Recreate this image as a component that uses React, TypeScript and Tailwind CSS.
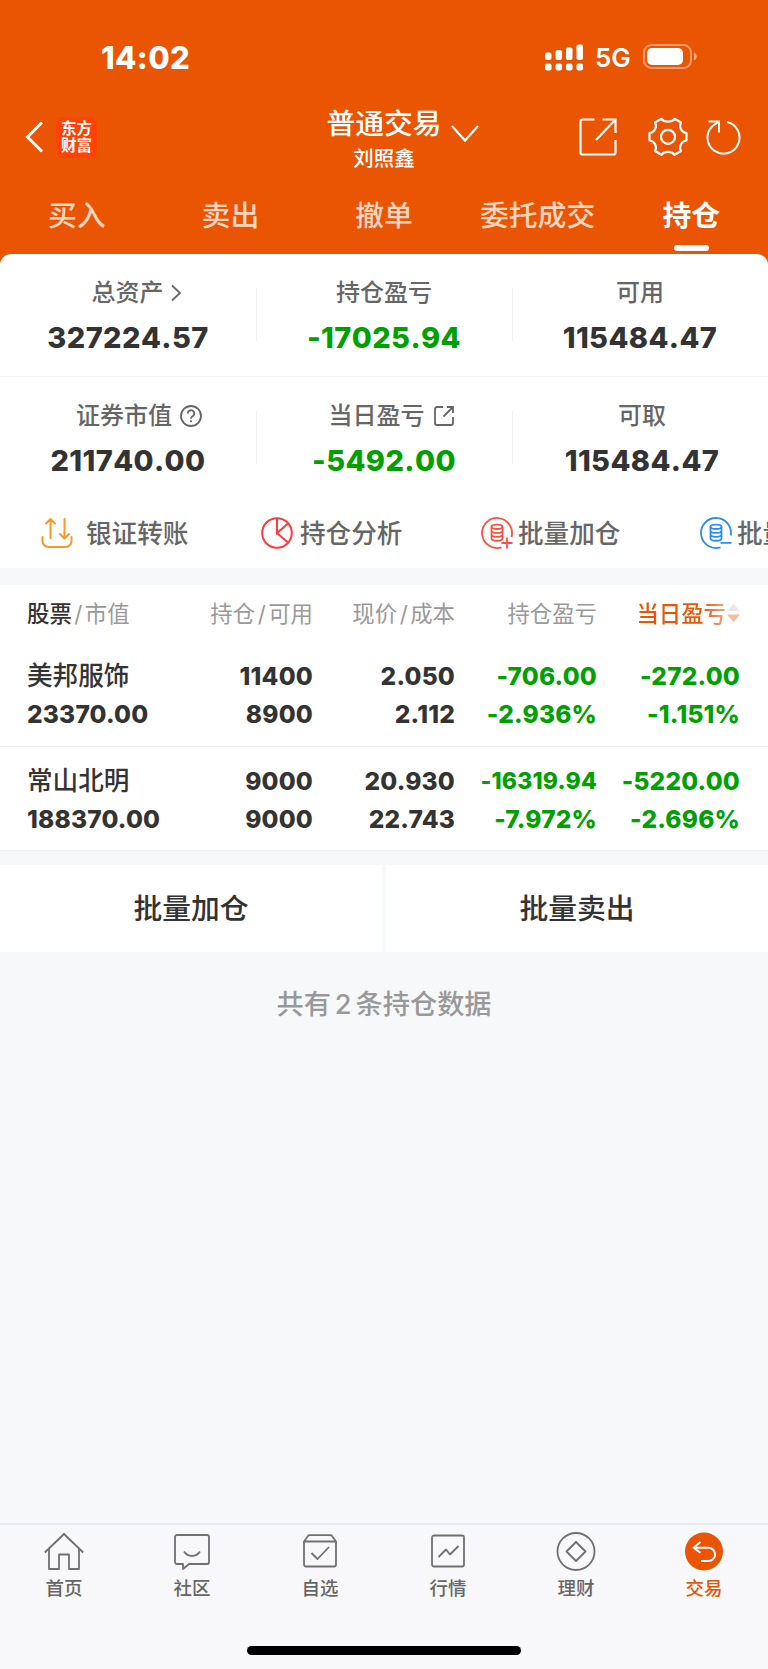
import type { ReactNode } from 'react';
import clsx from 'clsx';

const TABS = ['买入', '卖出', '撤单', '委托成交', '持仓'];

const HOLDINGS = [
  {
    name: '美邦服饰',
    value: '23370.00',
    amount: '11400',
    available: '8900',
    price: '2.050',
    cost: '2.112',
    profit: '-706.00',
    profitRate: '-2.936%',
    day: '-272.00',
    dayRate: '-1.151%',
  },
  {
    name: '常山北明',
    value: '188370.00',
    amount: '9000',
    available: '9000',
    price: '20.930',
    cost: '22.743',
    profit: '-16319.94',
    profitRate: '-7.972%',
    day: '-5220.00',
    dayRate: '-2.696%',
  },
];

const StatusBar = () => (
  <div className="flex h-[114px] items-center text-white">
    <span className="ml-[101px] w-[444px] text-[31px] leading-none font-extrabold tracking-[0.4px]">14:02</span>
    <svg width="38" height="27" viewBox="0 0 38 27" fill="currentColor">
      <rect x="0" y="8.5" width="6.5" height="7.5" rx="2" />
      <rect x="10.5" y="6" width="6.5" height="10" rx="2" />
      <rect x="21" y="3.5" width="6.5" height="12.5" rx="2" />
      <rect x="31.5" y="0.5" width="6.5" height="15.5" rx="2" />
      <rect x="0" y="19.5" width="6.5" height="7" rx="2" />
      <rect x="10.5" y="19.5" width="6.5" height="7" rx="2" />
      <rect x="21" y="19.5" width="6.5" height="7" rx="2" />
      <rect x="31.5" y="19.5" width="6.5" height="7" rx="2" />
    </svg>
    <span className="ml-3 w-[48px] pt-0.5 text-[26px] leading-none font-semibold">5G</span>
    <svg className="-mt-px" width="54" height="25" viewBox="0 0 54 25" fill="none">
      <rect x="1" y="1" width="47" height="23" rx="7.5" stroke="#fff" strokeOpacity="0.4" strokeWidth="2" />
      <rect x="4" y="4" width="36" height="17" rx="5" fill="#fff" />
      <path d="M51 8.5c3.6 1.4 3.6 6.6 0 8z" fill="#fff" fillOpacity="0.5" />
    </svg>
  </div>
);

const TitleBar = () => (
  <div className="grid h-[75px] grid-cols-[326px_1fr_190px] pt-px text-white">
    <div className="flex h-11 items-center pl-[25px]">
      <svg width="18" height="32" viewBox="0 0 18 32" fill="none" stroke="currentColor" strokeWidth="3">
        <path d="M17 1.5 2.5 16 17 30.5" />
      </svg>
      <div className="ml-[13px] flex h-[41px] w-[41px] flex-col items-center justify-center rounded-[7px] bg-[#ff4205] text-[15.5px] leading-[17.5px] font-bold">
        <span>东方</span>
        <span>财富</span>
      </div>
    </div>
    <div className="flex">
      <div className="flex w-[116px] flex-col items-center">
        <span className="-mt-2 text-[28.8px] leading-[34px] font-medium whitespace-nowrap">普通交易</span>
        <span className="mt-1 text-[20.5px] leading-7 font-medium">刘照鑫</span>
      </div>
      <svg className="mt-2.5 ml-[9px]" width="28" height="18" viewBox="0 0 28 18" fill="none" stroke="currentColor" strokeWidth="2.2">
        <path d="M1 1 14 15.5 27 1" />
      </svg>
    </div>
    <div className="flex h-11 items-center">
      <svg className="ml-px" width="38" height="38" viewBox="0 0 38 38" fill="none" stroke="currentColor" strokeWidth="2.2">
        <path d="M15.5 1.500H3.500a2 2 0 0 0-2 2v31a2 2 0 0 0 2 2h31a2 2 0 0 0 2-2V22M23.500 1.500h13v13.500M36.500 1.500 17 22" />
      </svg>
      <svg className="ml-[31px]" width="40" height="40" viewBox="0 0 40 40" fill="none" stroke="currentColor" strokeWidth="2.2">
        <path d="M13.5 1.8C16 5.500 24 5.500 26.500 1.800L33 5.500C30.500 10 33.500 15.500 38.500 16V23.500C33.500 24 30.500 29.500 33 34L26.500 37.800C24 34 16 34 13.500 37.800L7 34C9.500 29.500 6.500 24 1.500 23.500V16C6.500 15.500 9.500 10 7 5.500Z" strokeLinejoin="round" />
        <circle cx="20" cy="19.800" r="7" />
      </svg>
      <svg className="ml-[17px]" width="36" height="36" viewBox="0 0 36 36" fill="none" stroke="currentColor" strokeWidth="2">
        <path d="M22 3A16 16 0 1 1 7.500 7L13.500 3M3.500 2.500H14V13.500" />
      </svg>
    </div>
  </div>
);

const Tabs = () => (
  <div className="grid h-[65px] grid-cols-5 pt-px">
    {TABS.map((tab, i) => (
      <div
        key={tab}
        className={clsx(
          'flex flex-col items-center text-[28.8px] leading-[52px]',
          i === 4 ? 'font-bold text-white' : 'font-medium text-[#fbd5c0]',
        )}
      >
        {tab}
        {i === 4 && <span className="mt-[3px] h-[5.5px] w-[35px] rounded-full bg-white" />}
      </div>
    ))}
  </div>
);

interface StatProps {
  label: string;
  value: string;
  green?: boolean;
  line?: boolean;
  icon?: ReactNode;
  className?: string;
  labelClassName?: string;
}

const Stat = ({ label, value, green, line, icon, className, labelClassName }: StatProps) => (
  <div className={clsx('relative flex flex-col items-center', className)}>
    <div className={clsx('mt-[23px] flex h-8 items-center text-[24px] font-medium text-[#666]', labelClassName)}>
      {label}
      {icon}
    </div>
    <div
      className={clsx(
        'mt-[13px] text-[29px] leading-8 font-extrabold tracking-[0.4px] [font-kerning:none]',
        green ? 'text-[#00a000]' : 'text-[#333]',
      )}
    >
      {value}
    </div>
    {line && <span className="absolute top-[34px] -right-px h-[53px] w-px bg-[#f0f0f0]" />}
  </div>
);

const Coins = ({ color, minus }: { color: string; minus?: boolean }) => (
  <svg width="32" height="32" viewBox="0 0 32 32" fill="none" stroke={color} strokeWidth="1.8">
    {minus ? (
      <path d="M20.5 30.3A15 15 0 1 1 30.8 18.5M20.5 25.8h11" />
    ) : (
      <path d="M20.5 30.3A15 15 0 1 1 30.5 20M20.5 26h11M26 20.5v11" />
    )}
    <ellipse cx="16" cy="9.8" rx="5.5" ry="2.2" />
    <path d="M10.5 9.8v11.7c0 3 11 3 11 0V9.8M10.5 13.7c0 3 11 3 11 0M10.5 17.6c0 3 11 3 11 0" />
  </svg>
);

const Actions = () => (
  <div className="flex h-[70px] overflow-hidden text-[25.6px] font-medium whitespace-nowrap text-[#666]">
    <div className="flex w-[220px] shrink-0 items-center pl-[41px]">
      <svg width="32" height="32" viewBox="0 0 32 32" fill="none" stroke="#f59a23" strokeWidth="2" strokeLinecap="round" strokeLinejoin="round">
        <path d="M1.5 20v4a6 6 0 0 0 6 6h17a6 6 0 0 0 6-6v-4M9.500 21V2M5 6.500 9.500 2 14 6.500M23.500 2v19.500M19 17l4.500 4.500L28 17" />
      </svg>
      <span className="mt-0.5 ml-[13px]">银证转账</span>
    </div>
    <div className="flex w-[220px] shrink-0 items-center pl-[41px]">
      <svg width="32" height="32" viewBox="0 0 32 32" fill="none" stroke="#fb3c3f" strokeWidth="2">
        <circle cx="16" cy="16" r="14.8" />
        <path d="M16 1.5V16L27 6.5M16 16l11 9.5" />
      </svg>
      <span className="mt-0.5 ml-[7px]">持仓分析</span>
    </div>
    <div className="flex w-[220px] shrink-0 items-center pl-[41px]">
      <Coins color="#f9503f" />
      <span className="mt-0.5 ml-[5px]">批量加仓</span>
    </div>
    <div className="flex w-[220px] shrink-0 items-center pl-10">
      <Coins color="#2b8ff0" minus />
      <span className="mt-0.5 ml-[5px]">批量卖出</span>
    </div>
  </div>
);

const Cell = ({ top, bottom, className, small }: { top: string; bottom: string; className?: string; small?: boolean }) => (
  <div className={clsx('text-right font-extrabold tracking-[0.2px]', className)}>
    <div className={clsx('leading-[38px]', small ? 'text-[23px]' : 'text-[24.5px]')}>{top}</div>
    <div className="text-[24.5px] leading-[38px]">{bottom}</div>
  </div>
);

const Holdings = () => (
  <div className="bg-white">
    <div className="grid h-[57px] grid-cols-[165px_121px_142px_142px_143px] items-center pl-[27px] text-right text-[22.4px] whitespace-nowrap text-[#999]">
      <div className="text-left">
        <span className="font-medium text-[#333]">股票</span>
        <span className="mx-[2.5px]">/</span>市值
      </div>
      <div>
        持仓<span className="mx-[2.5px]">/</span>可用
      </div>
      <div>
        现价<span className="mx-[2.5px]">/</span>成本
      </div>
      <div>持仓盈亏</div>
      <div className="flex items-center justify-end">
        <span className="bg-linear-to-r from-[#ea5504] from-75% to-[#f5a57a] bg-clip-text font-medium text-transparent">当日盈亏</span>
        <svg className="ml-px" width="13" height="20" viewBox="0 0 13 20">
          <path d="M0 8 6.5 1 13 8Z" fill="#e8e8e8" />
          <path d="M0 11.5h13L6.5 19Z" fill="#f9bd9d" />
        </svg>
      </div>
    </div>
    {HOLDINGS.map((h) => (
      <div
        key={h.name}
        className="grid h-[104.5px] grid-cols-[165px_121px_142px_142px_143px] border-b border-[#f0f0f0] pt-[15px] pl-[27px] text-[#333]"
      >
        <div>
          <div className="text-[25.6px] leading-[38px] font-medium">{h.name}</div>
          <div className="text-[24.5px] leading-[38px] font-extrabold tracking-[0.2px]">{h.value}</div>
        </div>
        <Cell top={h.amount} bottom={h.available} />
        <Cell top={h.price} bottom={h.cost} />
        <Cell top={h.profit} bottom={h.profitRate} className="text-[#00a000]" small={h.profit.length > 8} />
        <Cell top={h.day} bottom={h.dayRate} className="text-[#00a000]" />
      </div>
    ))}
  </div>
);

const NAV = [
  {
    label: '首页',
    icon: <path d="M.8 20.5 20 2 39.2 20.5M5 17v20h10V22.5h10V37h10V17" />,
  },
  {
    label: '社区',
    icon: <path d="M5 3h30a2 2 0 0 1 2 2v25a2 2 0 0 1-2 2H17l-6 5v-5H5a2 2 0 0 1-2-2V5a2 2 0 0 1 2-2ZM12 19.5c4 6 12 6 16 0" />,
  },
  {
    label: '自选',
    icon: <path d="M4 9.5h32v23a2 2 0 0 1-2 2H6a2 2 0 0 1-2-2ZM4 9.5 8 4q.5-.8 1.5-.8h21q1 0 1.5.8l4 5.5M11.5 21l6 6 11.5-12" />,
  },
  {
    label: '行情',
    icon: <path d="M6 3.5h28a2 2 0 0 1 2 2v27a2 2 0 0 1-2 2H6a2 2 0 0 1-2-2v-27a2 2 0 0 1 2-2ZM10.5 25l7.500-7.500 4 5L30.500 14" />,
  },
  {
    label: '理财',
    icon: (
      <>
        <circle cx="20" cy="19.5" r="18.5" />
        <path d="m20 10 9.5 9.5L20 29l-9.5-9.5Z" />
      </>
    ),
  },
  {
    label: '交易',
    icon: (
      <>
        <circle cx="20" cy="19.5" r="19" fill="#ea5504" stroke="none" />
        <path d="M17 29h7.5a6.6 6.6 0 0 0 0-13.2H10M16.5 10 9.5 15.8l7 5" stroke="#fff" strokeWidth="2" />
      </>
    ),
  },
];

const BottomNav = () => (
  <div className="h-[146px] border-t-2 border-[#e9eaef] bg-[#f8f8fb]">
    <div className="grid grid-cols-6 pt-[7px]">
      {NAV.map((item, i) => (
        <div
          key={item.label}
          className={clsx('flex flex-col items-center text-[18.5px] leading-7 font-medium', i === 5 ? 'text-[#ea5504]' : 'text-[#666]')}
        >
          <svg width="40" height="40" viewBox="0 0 40 40" fill="none" stroke="#707070" strokeWidth="1.8" strokeLinejoin="round">
            {item.icon}
          </svg>
          <span className="mt-0.5">{item.label}</span>
        </div>
      ))}
    </div>
    <div className="mx-auto mt-[44px] h-[9px] w-[274px] rounded-full bg-black" />
  </div>
);

export default function App() {
  return (
    <div className="flex h-[1669px] w-[768px] flex-col overflow-hidden bg-[#f7f8fa] font-['Inter','Noto_Sans_CJK_SC',sans-serif]">
      <div className="bg-[#ea5504]">
        <StatusBar />
        <TitleBar />
        <Tabs />
        <div className="rounded-t-[11px] bg-white">
          <div className="grid h-[123px] grid-cols-3 border-b border-[#f0f0f0]">
            <Stat
              label="总资产"
              value="327224.57"
              line
              labelClassName="pl-[17px]"
              icon={
                <svg className="ml-[7px]" width="11" height="18" viewBox="0 0 11 18" fill="none" stroke="currentColor" strokeWidth="1.8">
                  <path d="m1 1.5 8 7.5-8 7.5" />
                </svg>
              }
            />
            <Stat label="持仓盈亏" value="-17025.94" green line />
            <Stat label="可用" value="115484.47" />
          </div>
          <div className="grid h-[121px] grid-cols-3">
            <Stat
              label="证券市值"
              value="211740.00"
              line
              labelClassName="pl-[22px]"
              icon={
                <svg className="ml-2" width="22" height="22" viewBox="0 0 22 22" fill="none" stroke="currentColor" strokeWidth="1.8">
                  <circle cx="11" cy="11" r="10" />
                  <path d="M7.8 8.500a3.200 3.200 0 1 1 4.800 2.700q-1.600 1-1.600 2.600M11 15.300v2" />
                </svg>
              }
            />
            <Stat
              label="当日盈亏"
              value="-5492.00"
              green
              line
              labelClassName="pl-[15px]"
              icon={
                <svg className="ml-2" width="22" height="22" viewBox="0 0 22 22" fill="none" stroke="currentColor" strokeWidth="1.8">
                  <path d="M10 2H4a2 2 0 0 0-2 2v14a2 2 0 0 0 2 2h14a2 2 0 0 0 2-2v-6M14 2h6v6M20 2l-9.5 9.5" />
                </svg>
              }
            />
            <Stat label="可取" value="115484.47" className="pl-1" />
          </div>
          <Actions />
        </div>
      </div>
      <div className="mt-[17px]">
        <Holdings />
      </div>
      <div className="mt-[14px] grid h-[87px] grid-cols-2 gap-1 text-center text-[28.8px] leading-[86px] font-medium text-[#333]">
        <div className="bg-white pt-px">批量加仓</div>
        <div className="bg-white pt-px">批量卖出</div>
      </div>
      <div className="mt-[33px] flex-1 text-center text-[27.2px] leading-10 font-medium text-[#999]">
        共有<span className="mx-1">2</span>条持仓数据
      </div>
      <BottomNav />
    </div>
  );
}
